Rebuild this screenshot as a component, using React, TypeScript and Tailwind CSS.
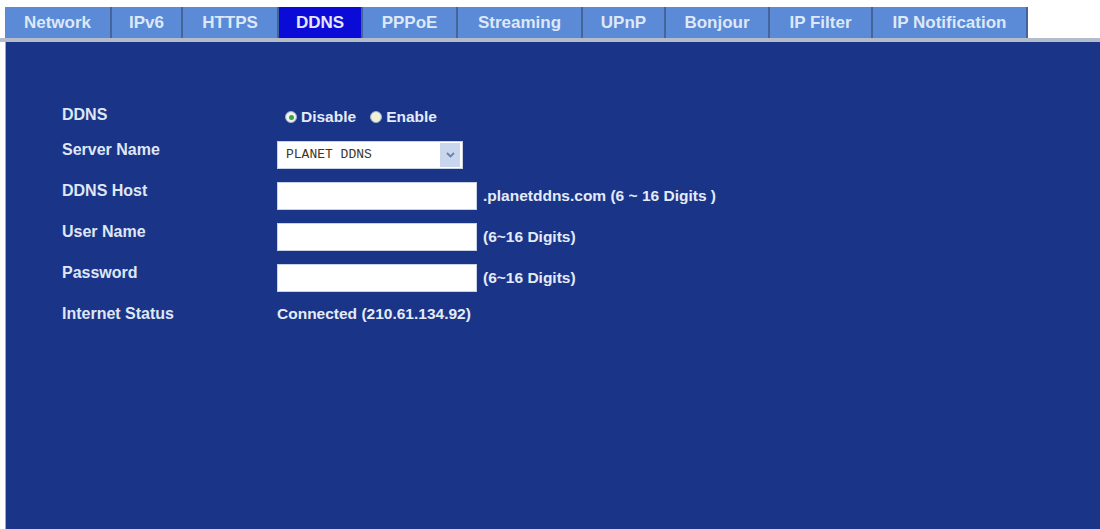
import React from "react";

const tabs = [
  { name: "Network", w: "w-[107px]" },
  { name: "IPv6", w: "w-[71px]" },
  { name: "HTTPS", w: "w-[96px]" },
  { name: "DDNS", w: "w-[84px]", active: true },
  { name: "PPPoE", w: "w-[95px]" },
  { name: "Streaming", w: "w-[125px]" },
  { name: "UPnP", w: "w-[83px]" },
  { name: "Bonjour", w: "w-[104px]" },
  { name: "IP Filter", w: "w-[103px]" },
  { name: "IP Notification", w: "w-[155px]" },
];

const Radio = ({ checked }: { checked?: boolean }) => (
  <span
    className={
      "flex h-[12px] w-[12px] items-center justify-center rounded-full border border-[#9fb0c8] " +
      (checked ? "bg-[#eef3f0]" : "bg-[#f1f0d8]")
    }
  >
    {checked && <span className="h-[5px] w-[5px] rounded-full bg-[#3aa53a]" />}
  </span>
);

const TextBox = () => (
  <input
    type="text"
    className="h-[28px] w-[200px] border border-[#c9d2e4] bg-white outline-none"
  />
);

const Row = ({ label, children }: { label: string; children: React.ReactNode }) => (
  <div className="flex items-start">
    <div className="w-[215px] text-[16px] font-bold leading-[18px] text-[#dfe7f6]">
      {label}
    </div>
    <div className="flex items-center">{children}</div>
  </div>
);

export default function App() {
  return (
    <div
      className="flex h-[529px] w-[1100px] flex-col bg-white"
      style={{ fontFamily: '"Liberation Sans", Arial, sans-serif' }}
    >
      {/* tabs */}
      <div className="flex pl-[5px] pt-[7px]">
        {tabs.map((t) => (
          <div
            key={t.name}
            className={
              t.w +
              " flex h-[31px] items-center justify-center border-r-2 border-[#45649c] text-[17px] font-bold " +
              (t.active ? "bg-[#0b0bd8] text-[#e6e6ff]" : "bg-[#5b8ad6] text-[#dde8f8]")
            }
          >
            {t.name}
          </div>
        ))}
      </div>
      <div className="h-[4px] bg-[#b4bccb]" />

      {/* panel */}
      <div className="ml-[5px] flex flex-1 flex-col gap-[13px] border-l border-[#9aa8c8] bg-[#1a3588] pl-[56px] pt-[64px]">
        <div className="flex h-[22px] items-start">
          <div className="w-[215px] text-[16px] font-bold leading-[18px] text-[#dfe7f6]">
            DDNS
          </div>
          <div className="flex h-[22px] items-center gap-[4px] pl-[8px] text-[15.5px] font-bold text-[#e4ebf8]">
            <Radio checked />
            <span className="mr-[10px]">Disable</span>
            <Radio />
            <span>Enable</span>
          </div>
        </div>

        <Row label="Server Name">
          <div className="flex h-[28px] w-[186px] items-center justify-between border border-[#c9d2e4] bg-white pl-[8px] pr-[2px]">
            <span
              className="text-[13px] text-[#3d3526]"
              style={{ fontFamily: '"Liberation Mono", "Courier New", monospace' }}
            >
              PLANET DDNS
            </span>
            <span className="flex h-[24px] w-[20px] items-center justify-center bg-[#c9d6ee]">
              <svg width="9" height="6" viewBox="0 0 9 6">
                <path d="M1 1 L4.5 4.5 L8 1" stroke="#6a82b0" strokeWidth="1.8" fill="none" />
              </svg>
            </span>
          </div>
        </Row>

        <Row label="DDNS Host">
          <TextBox />
          <span className="ml-[6px] text-[15.5px] font-bold text-[#e4ebf8]">
            .planetddns.com (6 ~ 16 Digits )
          </span>
        </Row>

        <Row label="User Name">
          <TextBox />
          <span className="ml-[6px] text-[15.5px] font-bold text-[#e4ebf8]">(6~16 Digits)</span>
        </Row>

        <Row label="Password">
          <TextBox />
          <span className="ml-[6px] text-[15.5px] font-bold text-[#e4ebf8]">(6~16 Digits)</span>
        </Row>

        <div className="flex items-start">
          <div className="w-[215px] text-[16px] font-bold leading-[18px] text-[#dfe7f6]">
            Internet Status
          </div>
          <div className="text-[15.5px] font-bold leading-[18px] text-[#e4ebf8]">
            Connected (210.61.134.92)
          </div>
        </div>
      </div>
    </div>
  );
}
